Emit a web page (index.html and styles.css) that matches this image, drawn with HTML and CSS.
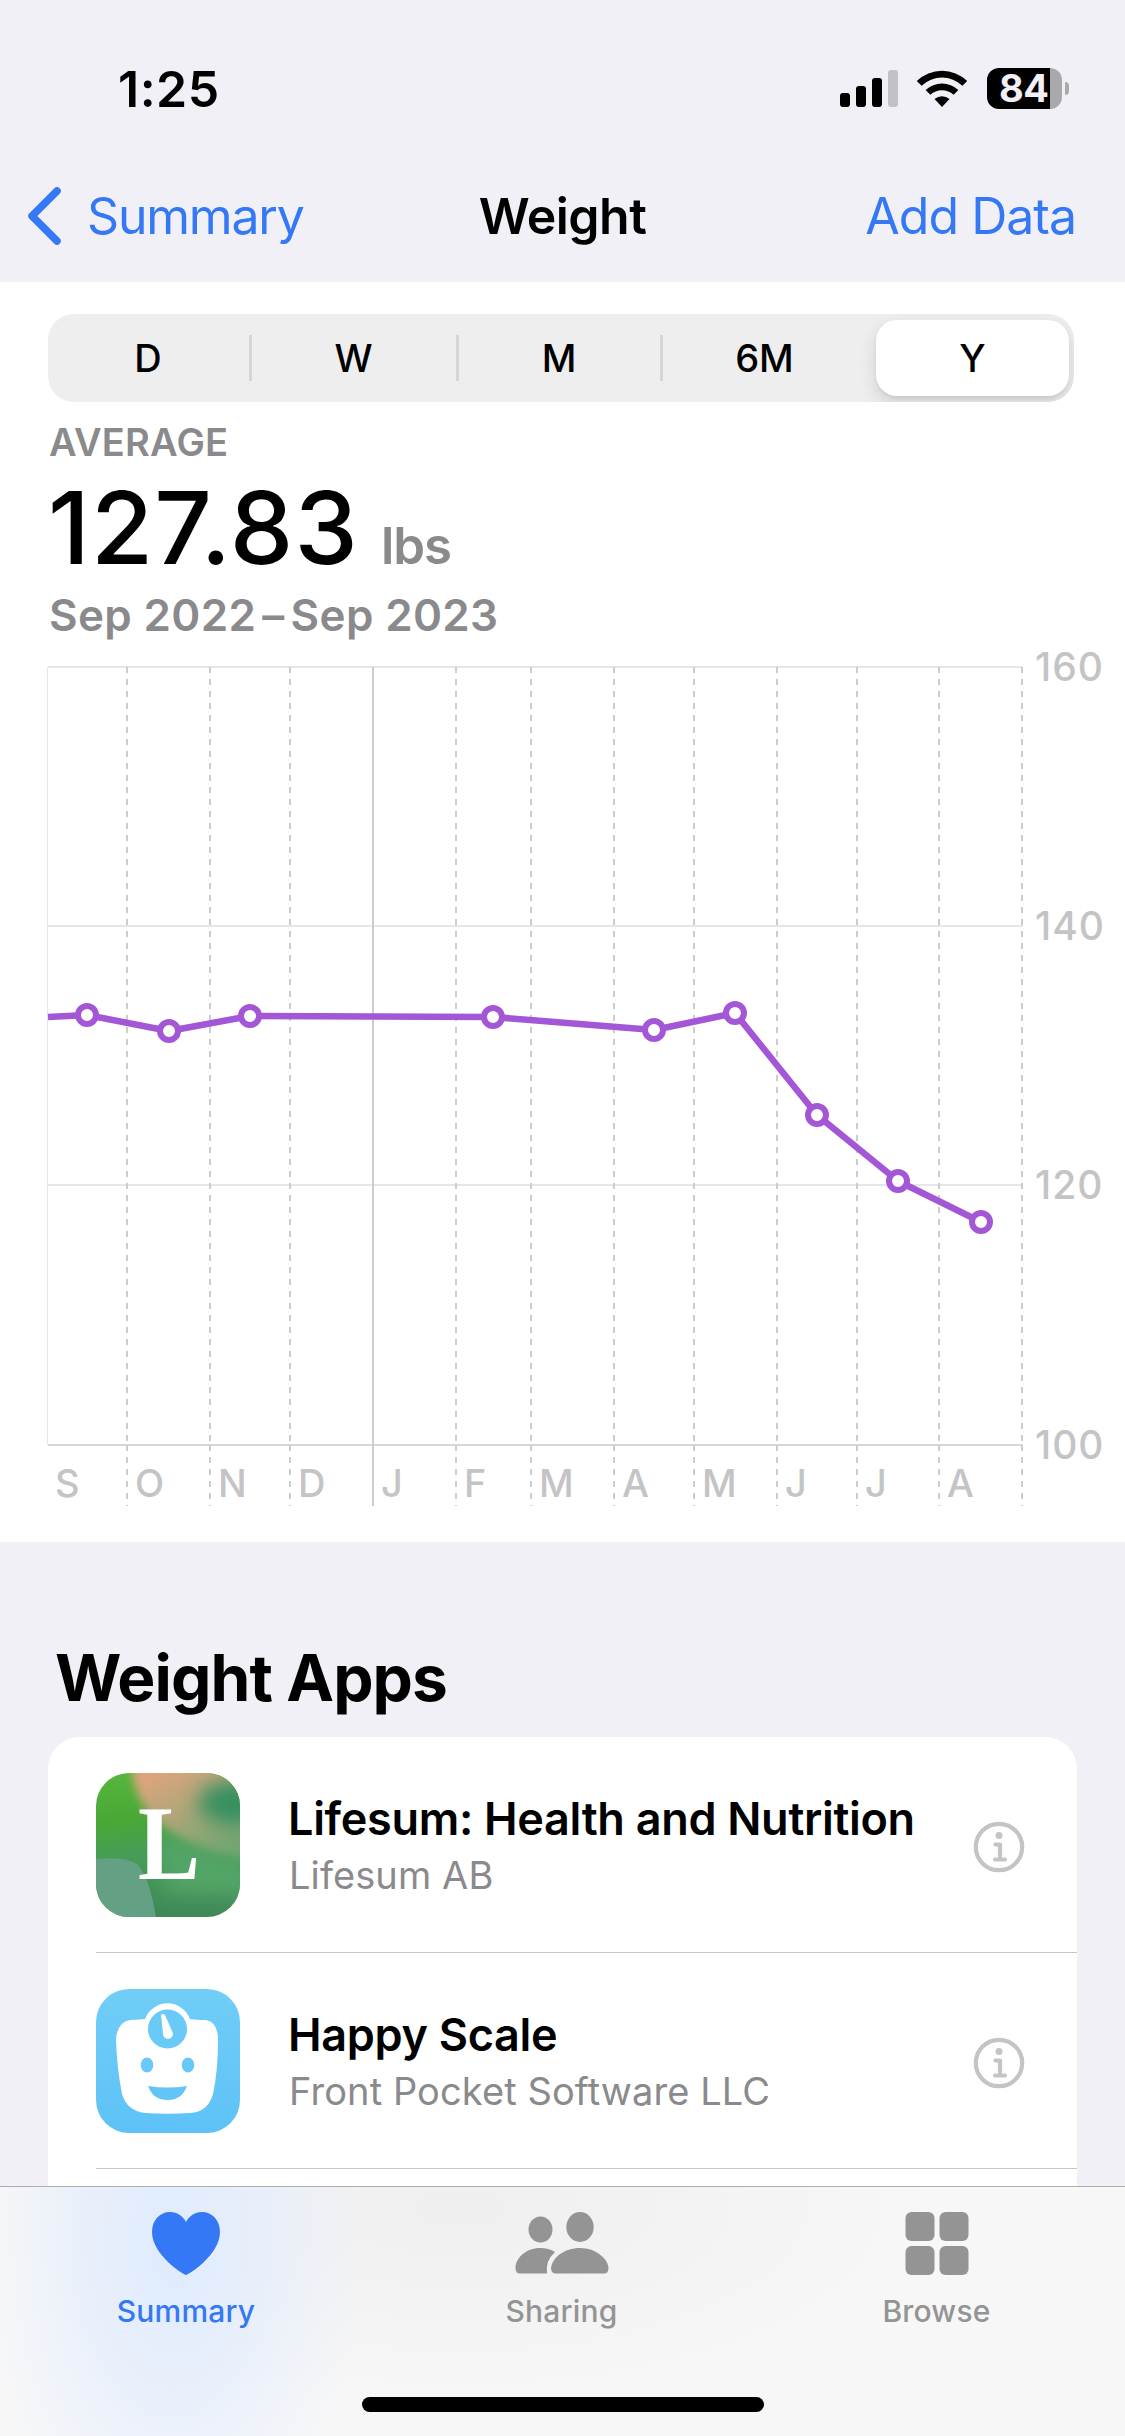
FILE: index.html
```html
<!DOCTYPE html>
<html lang="en">
<head>
    <meta charset="UTF-8">
    <meta name="viewport" content="width=device-width, initial-scale=1.0">
    <title>Weight</title>
    <link rel="stylesheet" href="styles.css">
</head>
<body>
    <header class="top">
        <div class="status">
            <span class="time">1:25</span>
            <div class="status-icons">
                <svg class="signal" width="58" height="38" viewBox="0 0 58 38">
                    <rect x="0" y="23" width="10" height="14" rx="3"/>
                    <rect x="16" y="16" width="10" height="21" rx="3"/>
                    <rect x="32" y="8" width="10" height="29" rx="3"/>
                    <rect class="off" x="48" y="0" width="10" height="37" rx="3"/>
                </svg>
                <svg class="wifi" width="52" height="38" viewBox="0 0 52 38">
                    <path d="M0.8 10.9 A36.5 36.5 0 0 1 51.2 10.9 L46.4 15.7 A29.5 29.5 0 0 0 5.6 15.7 Z"/>
                    <path d="M9.6 20 A24 24 0 0 1 42.4 20 L37.6 24.8 A17 17 0 0 0 14.4 24.8 Z"/>
                    <path d="M18.5 29 A11.5 11.5 0 0 1 33.5 29 L26 37 Z"/>
                </svg>
                <div class="battery"><span>84</span></div>
                <div class="nub"></div>
            </div>
        </div>
        <nav class="navbar">
            <a class="back">
                <svg width="34" height="58" viewBox="0 0 34 58"><path d="M30 4 L5 29 L30 54"/></svg>
                <span>Summary</span>
            </a>
            <h1>Weight</h1>
            <a class="add">Add Data</a>
        </nav>
    </header>

    <section class="weight">
        <div class="segments">
            <span>D</span>
            <span>W</span>
            <span>M</span>
            <span>6M</span>
            <span class="selected">Y</span>
        </div>
        <p class="caption">AVERAGE</p>
        <p class="value">127.83 <small>lbs</small></p>
        <p class="range">Sep 2022<i>–</i>Sep 2023</p>

        <svg class="chart" width="1125" height="870" viewBox="0 640 1125 870">
            <g class="grid">
                <path d="M48 667H1023M48 926H1023M48 1185H1023"/>
                <path class="left" d="M47.5 667V1445"/>
                <path class="base" d="M48 1445H1023"/>
            </g>
            <g class="months">
                <path d="M127 667V1443M210 667V1443M290 667V1443M456 667V1443M531 667V1443M614 667V1443M694 667V1443M777 667V1443M857 667V1443M939 667V1443M1022 667V1443"/>
                <path d="M127 1445V1506M210 1445V1506M290 1445V1506M456 1445V1506M531 1445V1506M614 1445V1506M694 1445V1506M777 1445V1506M857 1445V1506M939 1445V1506M1022 1445V1506"/>
                <path class="year" d="M373 667V1506"/>
            </g>
            <g class="labels">
                <text class="y-label" x="1035" y="681">160</text>
                <text class="y-label" x="1035" y="940">140</text>
                <text class="y-label" x="1035" y="1199">120</text>
                <text class="y-label" x="1035" y="1459">100</text>
                <text x="55" y="1497">S</text>
                <text x="135" y="1497">O</text>
                <text x="218" y="1497">N</text>
                <text x="298" y="1497">D</text>
                <text x="381" y="1497">J</text>
                <text x="464" y="1497">F</text>
                <text x="539" y="1497">M</text>
                <text x="622" y="1497">A</text>
                <text x="702" y="1497">M</text>
                <text x="785" y="1497">J</text>
                <text x="865" y="1497">J</text>
                <text x="947" y="1497">A</text>
            </g>
            <polyline class="line" points="48,1017 87,1015 169,1031 250,1016 493,1017 654,1030 735,1013 817,1115 898,1181 981,1222"/>
            <g class="points">
                <circle cx="87" cy="1015" r="9"/>
                <circle cx="169" cy="1031" r="9"/>
                <circle cx="250" cy="1016" r="9"/>
                <circle cx="493" cy="1017" r="9"/>
                <circle cx="654" cy="1030" r="9"/>
                <circle cx="735" cy="1013" r="9"/>
                <circle cx="817" cy="1115" r="9"/>
                <circle cx="898" cy="1181" r="9"/>
                <circle cx="981" cy="1222" r="9"/>
            </g>
        </svg>
    </section>

    <section class="apps">
        <h2>Weight Apps</h2>
        <ul class="card">
            <li>
                <svg class="app-icon" width="144" height="144" viewBox="0 0 144 144">
                    <defs>
                        <linearGradient id="leaf" x1="0" y1="0" x2="0.15" y2="1">
                            <stop offset="0" stop-color="#56b63c"/>
                            <stop offset="0.35" stop-color="#49a835"/>
                            <stop offset="0.6" stop-color="#469c58"/>
                            <stop offset="1" stop-color="#3f8a58"/>
                        </linearGradient>
                        <linearGradient id="peach" x1="0.2" y1="0" x2="0.8" y2="0.9">
                            <stop offset="0.1" stop-color="#dea47d"/>
                            <stop offset="0.5" stop-color="#b0a679"/>
                            <stop offset="1" stop-color="#70a672"/>
                        </linearGradient>
                        <filter id="soft" x="-50%" y="-50%" width="200%" height="200%">
                            <feGaussianBlur stdDeviation="5"/>
                        </filter>
                        <filter id="softer" x="-100%" y="-100%" width="300%" height="300%">
                            <feGaussianBlur stdDeviation="10"/>
                        </filter>
                    </defs>
                    <rect width="144" height="144" fill="url(#leaf)"/>
                    <path fill="#52a566" filter="url(#softer)" d="M60 60 L160 90 V125 L70 120 Z"/>
                    <path fill="url(#peach)" filter="url(#soft)" d="M36 -15 H160 V88 Q110 82 78 60 Q34 36 36 -15 Z"/>
                    <ellipse cx="140" cy="30" rx="38" ry="22" fill="#369060" filter="url(#softer)"/>
                    <path fill="#64a184" d="M0 86 Q32 83 42 92 Q53 104 60 144 H0 Z"/>
                    <text class="mark" x="42" y="106" textLength="62" lengthAdjust="spacingAndGlyphs">L</text>
                </svg>
                <div class="app-text">
                    <h3>Lifesum: Health and Nutrition</h3>
                    <p>Lifesum AB</p>
                </div>
                <svg class="info" width="52" height="52" viewBox="0 0 52 52">
                    <circle cx="26" cy="26" r="23.2"/>
                    <circle class="dot" cx="26" cy="14.5" r="3.5"/>
                    <path d="M22.5 23.5H27V38.5M22 38.5H32"/>
                </svg>
            </li>
            <li>
                <svg class="app-icon" width="144" height="144" viewBox="0 0 144 144">
                    <defs>
                        <linearGradient id="sky" x1="0" y1="0" x2="0" y2="1">
                            <stop offset="0" stop-color="#70cdf7"/>
                            <stop offset="1" stop-color="#5ec2f7"/>
                        </linearGradient>
                    </defs>
                    <rect width="144" height="144" fill="url(#sky)"/>
                    <path fill="#fff" d="M34 31 Q45 30.5 49 30 A24 24 0 0 1 94 30 Q100 31 110 31 Q122 33 122 51 Q122 82 117 105 Q112 123 94 124 Q72 125.5 49 124 Q31 122 26 105 Q21 80 20 51 Q21 33 34 31 Z"/>
                    <circle cx="71.5" cy="40" r="19.5" fill="#69c9f7"/>
                    <path fill="#fff" d="M65 26 Q67 24 69 26 L76 42 A5 5 0 1 1 67 44 Z"/>
                    <ellipse cx="51" cy="76" rx="6.3" ry="7.5" fill="#68c8f7"/>
                    <ellipse cx="92" cy="76" rx="6.3" ry="7.5" fill="#68c8f7"/>
                    <path fill="#63c5f7" d="M52 97 Q72 100 91 97 Q86 111 71.5 111 Q57 111 52 97 Z"/>
                </svg>
                <div class="app-text">
                    <h3>Happy Scale</h3>
                    <p>Front Pocket Software LLC</p>
                </div>
                <svg class="info" width="52" height="52" viewBox="0 0 52 52">
                    <circle cx="26" cy="26" r="23.2"/>
                    <circle class="dot" cx="26" cy="14.5" r="3.5"/>
                    <path d="M22.5 23.5H27V38.5M22 38.5H32"/>
                </svg>
            </li>
        </ul>
    </section>

    <footer class="tabbar">
        <div class="tab active">
            <svg width="70" height="66" viewBox="0 0 70 66">
                <path d="M35 64 C33 64 1 44 1 21 C1 9 9 1 19 1 C26 1 32 5 35 11 C38 5 44 1 51 1 C61 1 69 9 69 21 C69 44 37 64 35 64 Z"/>
            </svg>
            <span>Summary</span>
        </div>
        <div class="tab">
            <svg width="94" height="66" viewBox="0 0 94 66">
                <ellipse cx="25.5" cy="18.5" rx="12" ry="13"/>
                <ellipse cx="65" cy="16" rx="13.7" ry="15"/>
                <path d="M5 62.5 Q0.5 62.5 0.5 57 C0.5 47 11 37 25 37 Q34 37 40 41 Q30 50 32 62.5 Z"/>
                <path d="M41 62.5 Q36 62.5 36 57 C37 47 49 37 65 37 C81 37 93 48 93.5 57 Q93.5 62.5 89 62.5 Z"/>
            </svg>
            <span>Sharing</span>
        </div>
        <div class="tab">
            <svg width="64" height="66" viewBox="0 0 64 66">
                <rect x="0.5" y="1" width="29" height="29" rx="6"/>
                <rect x="34.5" y="1" width="29" height="29" rx="6"/>
                <rect x="0.5" y="35" width="29" height="29" rx="6"/>
                <rect x="34.5" y="35" width="29" height="29" rx="6"/>
            </svg>
            <span>Browse</span>
        </div>
        <div class="home-bar"></div>
    </footer>
</body>
</html>
```
FILE: styles.css
```css
* {
    box-sizing: border-box;
    margin: 0;
    padding: 0;
}
body {
    width: 1125px;
    height: 2436px;
    overflow: hidden;
    display: flex;
    flex-direction: column;
    background-color: #f1f0f6;
    font-family: Inter, "Liberation Sans", sans-serif;
    color: #000;
}
.top {
    height: 282px;
}
.status {
    height: 160px;
    padding: 58px 56px 0 118px;
    display: flex;
    justify-content: space-between;
}
.time {
    font-size: 50px;
    line-height: 62px;
    font-weight: 600;
    letter-spacing: 0.5px;
}
.status-icons {
    display: flex;
    align-items: flex-start;
    padding-top: 10px;
}
.signal {
    margin: 2px 18px 0 0;
}
.signal .off {
    fill: #c2c1c6;
}
.wifi {
    margin: 2px 19px 0 0;
}
.battery {
    width: 75px;
    height: 41px;
    border-radius: 12px;
    background: linear-gradient(to right, #000 63px, #a9a9ab 63px);
    color: #f1f0f6;
    font-size: 38px;
    font-weight: 700;
    line-height: 41px;
    letter-spacing: -0.5px;
    padding-left: 12px;
}
.nub {
    width: 4px;
    height: 13px;
    margin: 14px 0 0 3px;
    border-radius: 0 6px 6px 0;
    background-color: #a9a9ab;
}
.navbar {
    height: 112px;
    padding: 0 49px;
    display: grid;
    grid-template-columns: 1fr auto 1fr;
    align-items: center;
    font-size: 50px;
    color: #3478f6;
}
.back {
    display: flex;
    align-items: center;
    gap: 26px;
    margin-left: -22px;
    letter-spacing: -1.2px;
}
.back path {
    fill: none;
    stroke: #3478f6;
    stroke-width: 7.5;
    stroke-linecap: round;
    stroke-linejoin: round;
}
.navbar h1 {
    font-size: 50px;
    font-weight: 600;
    letter-spacing: -0.5px;
    color: #000;
}
.add {
    text-align: right;
    letter-spacing: -1px;
}
.weight {
    height: 1260px;
    background-color: #fff;
    padding-top: 32px;
}
.segments {
    width: 1026px;
    height: 88px;
    margin-left: 48px;
    padding: 6px 0;
    display: grid;
    grid-template-columns: 204px 207px 204px 213px 193px;
    border-radius: 26px;
    background-color: #eee;
    overflow: hidden;
}
.segments span {
    position: relative;
    padding-right: 4px;
    font-size: 38px;
    font-weight: 450;
    line-height: 76px;
    text-align: center;
}
.segments span:nth-child(4) {
    padding-right: 10px;
}
.segments span:nth-child(-n+3)::after {
    content: "";
    position: absolute;
    right: 0;
    top: 15px;
    width: 3px;
    height: 46px;
    background-color: #d5d5d6;
}
.segments .selected {
    padding-right: 0;
    font-weight: 500;
    background-color: #fff;
    border-radius: 21px;
    box-shadow: 0 7px 18px rgba(0, 0, 0, 0.13), 0 3px 3px rgba(0, 0, 0, 0.05);
}
.caption {
    margin: 17px 0 0 49px;
    font-size: 38px;
    font-weight: 600;
    line-height: 46px;
    letter-spacing: 0.2px;
    color: #8a8a8d;
}
.value {
    height: 110px;
    margin: 7px 0 0 48px;
    font-size: 101px;
    font-weight: 500;
    line-height: 110px;
    letter-spacing: 1.1px;
    white-space: nowrap;
}
.value small {
    margin-left: -6px;
    font-size: 51px;
    font-weight: 600;
    letter-spacing: -1px;
    color: #8a8a8d;
}
.range {
    height: 60px;
    margin: 3px 0 0 49px;
    font-size: 44px;
    font-weight: 600;
    line-height: 60px;
    letter-spacing: 0.35px;
    color: #8a8a8d;
}
.range i {
    font-style: normal;
    margin: 0 6px;
}
.chart {
    display: block;
    margin-top: -5px;
}
.grid path {
    fill: none;
    stroke: #e6e6e8;
    stroke-width: 2;
}
.grid .left {
    stroke-width: 1;
}
.grid .base {
    stroke: #d6d6d8;
}
.months path {
    stroke: #cdcdcf;
    stroke-width: 2;
    stroke-dasharray: 6 6;
}
.months .year {
    stroke-dasharray: none;
}
.labels text {
    font-size: 38px;
    font-weight: 500;
    fill: #c4c4c6;
}
.labels .y-label {
    font-size: 39px;
    letter-spacing: 1px;
}
.line {
    fill: none;
    stroke: #a357d7;
    stroke-width: 6.5;
    stroke-linejoin: round;
}
.points circle {
    fill: #fff;
    stroke: #a357d7;
    stroke-width: 6;
}
.apps {
    height: 644px;
    padding: 96px 48px 0;
    overflow: hidden;
}
.apps h2 {
    height: 99px;
    margin-left: 7px;
    font-size: 64px;
    font-weight: 700;
    line-height: 80px;
    letter-spacing: -0.9px;
}
.card {
    height: 480px;
    border-radius: 32px;
    background-color: #fff;
    list-style: none;
}
.card li {
    height: 216px;
    margin-left: 48px;
    padding: 1px 52px 0 0;
    display: flex;
    align-items: center;
    border-bottom: 1px solid #c6c6c8;
}
.app-icon {
    flex: none;
    width: 144px;
    height: 144px;
    border-radius: 33px;
    overflow: hidden;
}
.mark {
    fill: #fff;
    font-family: "Liberation Serif", serif;
    font-size: 105px;
    font-weight: 700;
}
.app-text {
    flex: 1;
    margin: 4px 0 0 48px;
}
.app-text h3 {
    font-size: 45px;
    font-weight: 600;
    line-height: 56px;
    letter-spacing: -0.3px;
    white-space: nowrap;
}
.app-text p {
    margin-left: 1px;
    font-size: 38px;
    line-height: 56px;
    letter-spacing: 0.1px;
    color: #8a8a8d;
}
.info {
    flex: none;
    margin-top: 3px;
    fill: none;
    stroke: #c4c4c6;
    stroke-width: 4.2;
    stroke-linecap: round;
    stroke-linejoin: round;
}
.info .dot {
    fill: #c4c4c6;
    stroke: none;
}
.tabbar {
    position: relative;
    height: 250px;
    padding-top: 24px;
    display: grid;
    grid-template-columns: 372px 379px 371px;
    border-top: 1px solid #aeaeb0;
    background:
        radial-gradient(ellipse 190px 330px at 172px 60px, #deebfe 0, rgba(228, 237, 252, 0.8) 40%, rgba(240, 243, 250, 0) 100%),
        radial-gradient(ellipse 480px 200px at 460px 20px, #efefef 0, rgba(247, 247, 247, 0) 100%),
        #f7f7f8;
}
.tab {
    display: flex;
    flex-direction: column;
    align-items: center;
    font-size: 30px;
    font-weight: 500;
    color: #949494;
    fill: #949494;
}
.tab span {
    margin-top: 16px;
    line-height: 36px;
    letter-spacing: 0.2px;
}
.tab.active {
    color: #3478f6;
    fill: #3478f6;
}
.home-bar {
    position: absolute;
    left: 362px;
    bottom: 24px;
    width: 402px;
    height: 15px;
    border-radius: 8px;
    background-color: #000;
}
```
